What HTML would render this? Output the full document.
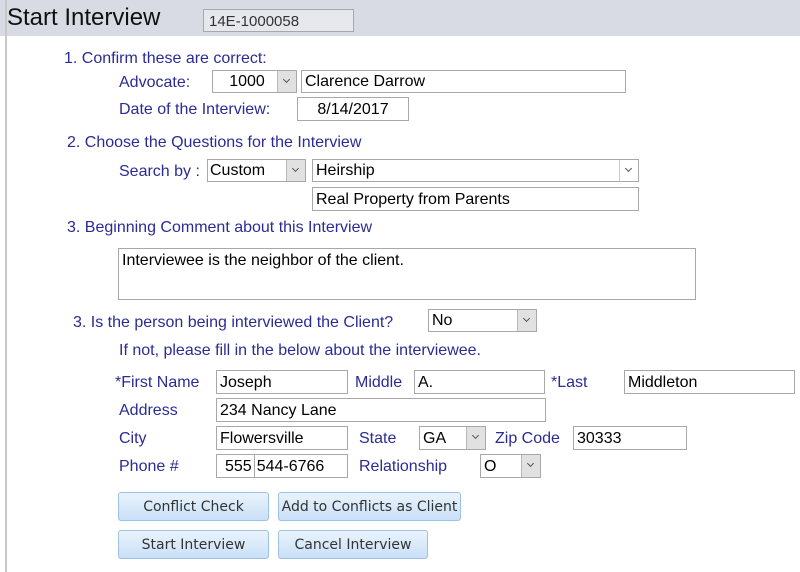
<!DOCTYPE html>
<html><head><style>
body{margin:0;width:800px;height:572px;background:#fff;position:relative;overflow:hidden;font-family:"Liberation Sans",Arial,sans-serif;font-size:16px}
.a{position:absolute;white-space:nowrap}
.l{color:#2b2b95;margin-top:2px}
.i{position:absolute;box-sizing:border-box;border:1px solid #a8a8a8;background:#fff;color:#000;padding:0 0 0 3px;line-height:23px;white-space:nowrap}
.s .ar{position:absolute;right:0;top:0;bottom:0;width:18px;background:#e1e1e1;border-left:1px solid #b8b8b8}
.s .ar:after{content:"";position:absolute;left:6px;top:6px;width:4px;height:4px;border-right:1px solid #555;border-bottom:1px solid #555;transform:rotate(45deg)}
.b{position:absolute;box-sizing:border-box;border:1px solid #9ec2e6;border-radius:3px;background:linear-gradient(#eaf3fc,#c9e0f7);color:#333;text-align:center;line-height:28px;font-family:"DejaVu Sans","Liberation Sans",sans-serif;font-size:14px}
</style></head><body>
<div class="a" style="left:0;top:0;width:800px;height:36px;background:#d8dbe3"></div>
<div class="a" style="left:5px;top:0;width:2px;height:572px;background:#c8c8c8"></div>
<div class="a" style="left:7px;top:4px;font-size:24px;color:#111">Start Interview</div>
<div class="i" style="left:203px;top:9px;width:151px;height:23px;background:#e6e8ee;color:#333;font-size:15px;padding-left:5px">14E-1000058</div>

<div class="a l" style="left:64px;top:48px">1. Confirm these are correct:</div>
<div class="a l" style="left:119px;top:72px">Advocate:</div>
<div class="i s" style="left:212px;top:70px;width:85px;height:23px;text-align:center;padding-right:18px;line-height:22px">1000<span class="ar"></span></div>
<div class="i" style="left:301px;top:70px;width:325px;height:23px;line-height:22px">Clarence Darrow</div>
<div class="a l" style="left:119px;top:99px">Date of the Interview:</div>
<div class="i" style="left:297px;top:97px;width:112px;height:24px;text-align:center;padding:0">8/14/2017</div>

<div class="a l" style="left:67px;top:132px">2. Choose the Questions for the Interview</div>
<div class="a l" style="left:119px;top:161px">Search by :</div>
<div class="i s" style="left:207px;top:159px;width:99px;height:23px;padding-left:2px;line-height:22px">Custom<span class="ar"></span></div>
<div class="i s" style="left:312px;top:159px;width:327px;height:23px;line-height:22px">Heirship<span class="ar" style="background:#fff;border-left:1px solid #ccc"></span></div>
<div class="i" style="left:312px;top:187px;width:327px;height:24px">Real Property from Parents</div>

<div class="a l" style="left:67px;top:217px">3. Beginning Comment about this Interview</div>
<div class="i" style="left:118px;top:248px;width:578px;height:52px;line-height:24px">Interviewee is the neighbor of the client.</div>

<div class="a l" style="left:73px;top:312px">3. Is the person being interviewed the Client?</div>
<div class="i s" style="left:428px;top:309px;width:109px;height:23px;line-height:22px">No<span class="ar"></span></div>
<div class="a l" style="left:119px;top:340px">If not, please fill in the below about the interviewee.</div>

<div class="a l" style="left:115px;top:372px">*First Name</div>
<div class="i" style="left:216px;top:370px;width:132px;height:24px">Joseph</div>
<div class="a l" style="left:355px;top:372px">Middle</div>
<div class="i" style="left:414px;top:370px;width:131px;height:24px">A.</div>
<div class="a l" style="left:551px;top:372px">*Last</div>
<div class="i" style="left:624px;top:370px;width:171px;height:24px">Middleton</div>

<div class="a l" style="left:119px;top:400px">Address</div>
<div class="i" style="left:216px;top:398px;width:330px;height:24px">234 Nancy Lane</div>

<div class="a l" style="left:119px;top:428px">City</div>
<div class="i" style="left:216px;top:426px;width:132px;height:24px">Flowersville</div>
<div class="a l" style="left:359px;top:428px">State</div>
<div class="i s" style="left:419px;top:426px;width:67px;height:24px">GA<span class="ar"></span></div>
<div class="a l" style="left:495px;top:428px">Zip Code</div>
<div class="i" style="left:573px;top:426px;width:114px;height:24px">30333</div>

<div class="a l" style="left:119px;top:456px">Phone #</div>
<div class="i" style="left:216px;top:454px;width:132px;height:24px;padding-left:8px">555<span style="display:inline-block;border-left:1px solid #a8a8a8;height:22px;vertical-align:top;margin-left:2px;padding-left:2px">544-6766</span></div>
<div class="a l" style="left:359px;top:456px">Relationship</div>
<div class="i s" style="left:480px;top:454px;width:61px;height:24px">O<span class="ar"></span></div>

<div class="b" style="left:118px;top:492px;width:151px;height:29px">Conflict Check</div>
<div class="b" style="left:278px;top:492px;width:183px;height:29px">Add to Conflicts as Client</div>
<div class="b" style="left:118px;top:530px;width:151px;height:29px">Start Interview</div>
<div class="b" style="left:278px;top:530px;width:150px;height:29px">Cancel Interview</div>
</body></html>
